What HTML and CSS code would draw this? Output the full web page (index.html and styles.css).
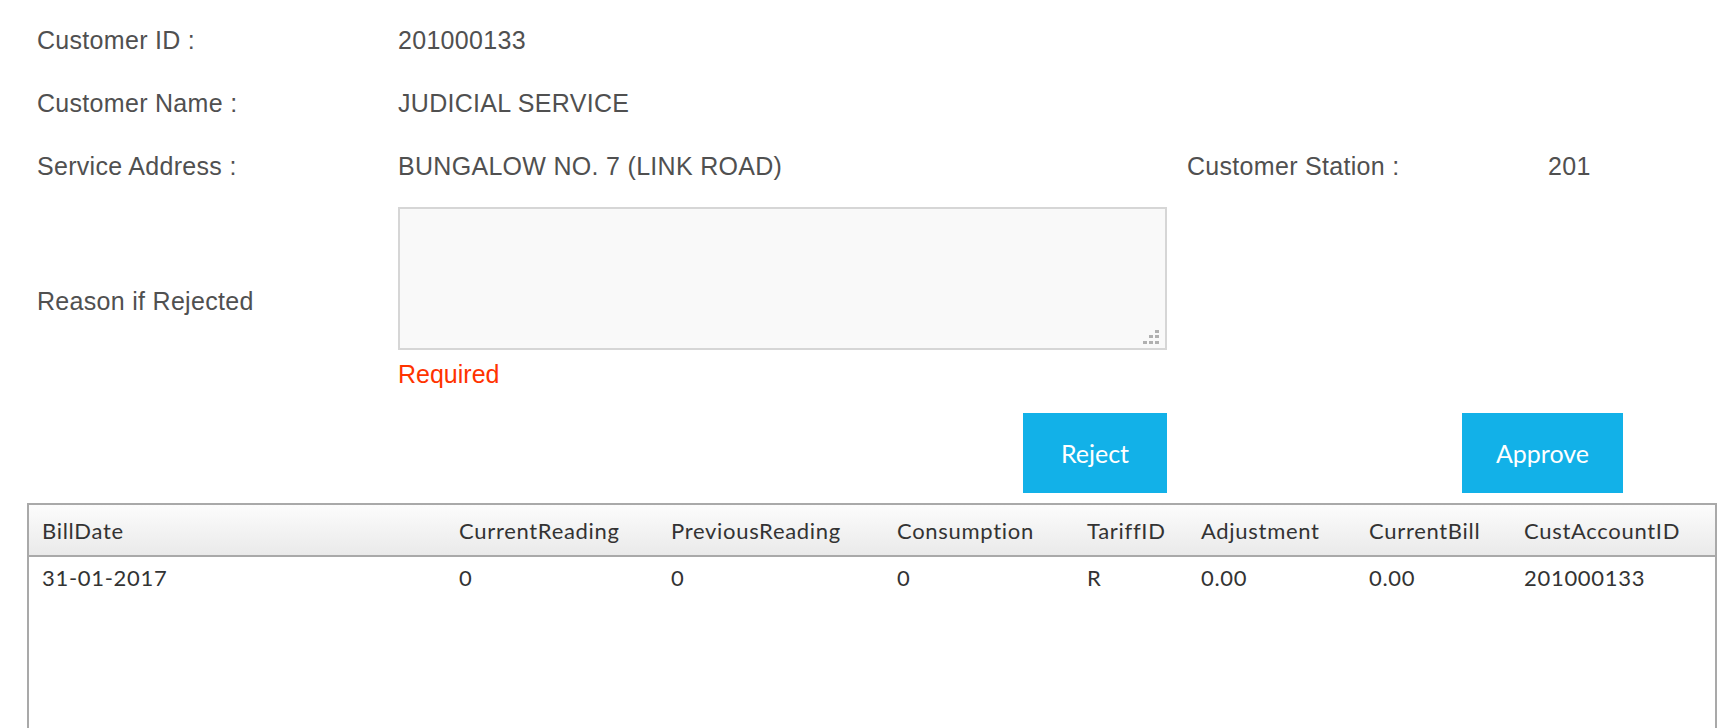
FILE: index.html
```html
<!DOCTYPE html>
<html lang="en">
<head>
<meta charset="utf-8">
<title>Bill Approval</title>
<link rel="stylesheet" href="styles.css">
</head>
<body>
<div class="page">
  <div class="form">
    <div class="label">Customer ID :</div>
    <div class="value">201000133</div>
    <div class="gap"></div>

    <div class="label">Customer Name :</div>
    <div class="value">JUDICIAL SERVICE</div>
    <div class="gap"></div>

    <div class="label">Service Address :</div>
    <div class="value">BUNGALOW NO. 7 (LINK ROAD)</div>
    <div class="label">Customer Station :</div>
    <div class="value">201</div>

    <div class="label reason-label">Reason if Rejected</div>
    <div class="reason">
      <div class="textarea-wrap">
        <textarea class="textarea"></textarea>
        <svg class="grip" width="16" height="14" viewBox="0 0 16 14" aria-hidden="true">
          <rect x="12" y="0" width="4" height="3"/>
          <rect x="6" y="5" width="4" height="3"/>
          <rect x="12" y="5" width="4" height="3"/>
          <rect x="0" y="11" width="4" height="3"/>
          <rect x="6" y="11" width="4" height="3"/>
          <rect x="12" y="11" width="4" height="3"/>
        </svg>
      </div>
      <div class="required">Required</div>
    </div>
    <div class="gap"></div>

    <div class="btn-cell-reject"><button class="btn">Reject</button></div>
    <div class="btn-cell-approve"><button class="btn btn-approve">Approve</button></div>
  </div>

  <div class="grid-wrap">
    <table class="grid">
      <colgroup>
        <col class="c1"><col class="c2"><col class="c3"><col class="c4">
        <col class="c5"><col class="c6"><col class="c7"><col class="c8">
      </colgroup>
      <thead>
        <tr>
          <th>BillDate</th>
          <th>CurrentReading</th>
          <th>PreviousReading</th>
          <th>Consumption</th>
          <th>TariffID</th>
          <th>Adjustment</th>
          <th>CurrentBill</th>
          <th>CustAccountID</th>
        </tr>
      </thead>
      <tbody>
        <tr>
          <td>31-01-2017</td>
          <td>0</td>
          <td>0</td>
          <td>0</td>
          <td>R</td>
          <td>0.00</td>
          <td>0.00</td>
          <td>201000133</td>
        </tr>
      </tbody>
    </table>
  </div>
</div>
</body>
</html>
```

FILE: styles.css
```css
html, body {
  margin: 0;
  padding: 0;
  background: #ffffff;
}

.page {
  padding-top: 9px;
}

.form {
  display: grid;
  grid-template-columns: 361px 789px 361px 1fr;
  padding-left: 37px;
  font-family: "Liberation Sans", Arial, sans-serif;
  font-size: 25px;
  letter-spacing: 0.3px;
  color: #505050;
}

.label,
.value {
  line-height: 63px;
  white-space: nowrap;
}

.gap {
  grid-column: 3 / 5;
}

.reason-label {
  grid-column: 1;
  align-self: center;
  margin-top: 13px;
}

.reason {
  grid-column: 2;
  margin-top: 9px;
}

.textarea-wrap {
  position: relative;
  width: 769px;
  height: 143px;
}

.textarea {
  display: block;
  box-sizing: border-box;
  width: 100%;
  height: 100%;
  margin: 0;
  border: 2px solid #d6d6d6;
  background: #f9f9f9;
  resize: none;
  outline: none;
}

.grip {
  position: absolute;
  right: 8px;
  bottom: 6px;
  fill: #b0b0b0;
}

.required {
  margin-top: 7px;
  line-height: 35px;
  letter-spacing: 0;
  color: #ff3300;
}

.btn-cell-reject {
  grid-column: 2;
  margin-top: 21px;
  padding-left: 625px;
}

.btn-cell-approve {
  grid-column: 3 / 5;
  margin-top: 21px;
  padding-left: 275px;
}

.btn {
  display: block;
  box-sizing: border-box;
  width: 144px;
  height: 80px;
  margin: 0;
  border: 0;
  padding: 0;
  background: #12b1e8;
  color: #ffffff;
  font-family: Lato, "Open Sans", sans-serif;
  font-size: 25px;
  cursor: pointer;
}

.btn-approve {
  width: 161px;
}

.grid-wrap {
  margin: 10px 0 0 27px;
  width: 1690px;
  height: 320px;
  box-sizing: border-box;
  border: 2px solid #a9a9a9;
}

.grid {
  width: 100%;
  table-layout: fixed;
  border-collapse: collapse;
  font-family: Lato, "Open Sans", sans-serif;
  font-size: 22px;
  letter-spacing: 0.7px;
  color: #333333;
}

.c1 { width: 417px; }
.c2 { width: 212px; }
.c3 { width: 226px; }
.c4 { width: 190px; }
.c5 { width: 114px; }
.c6 { width: 168px; }
.c7 { width: 155px; }
.c8 { width: auto; }

.grid th {
  height: 51px;
  padding: 0 0 0 13px;
  box-sizing: border-box;
  text-align: left;
  font-weight: normal;
  white-space: nowrap;
  background: linear-gradient(#fcfcfc, #eaeaea);
  border-bottom: 2px solid #a9a9a9;
}

.grid td {
  padding: 0 0 0 13px;
  line-height: 42px;
  text-align: left;
  white-space: nowrap;
}
```
